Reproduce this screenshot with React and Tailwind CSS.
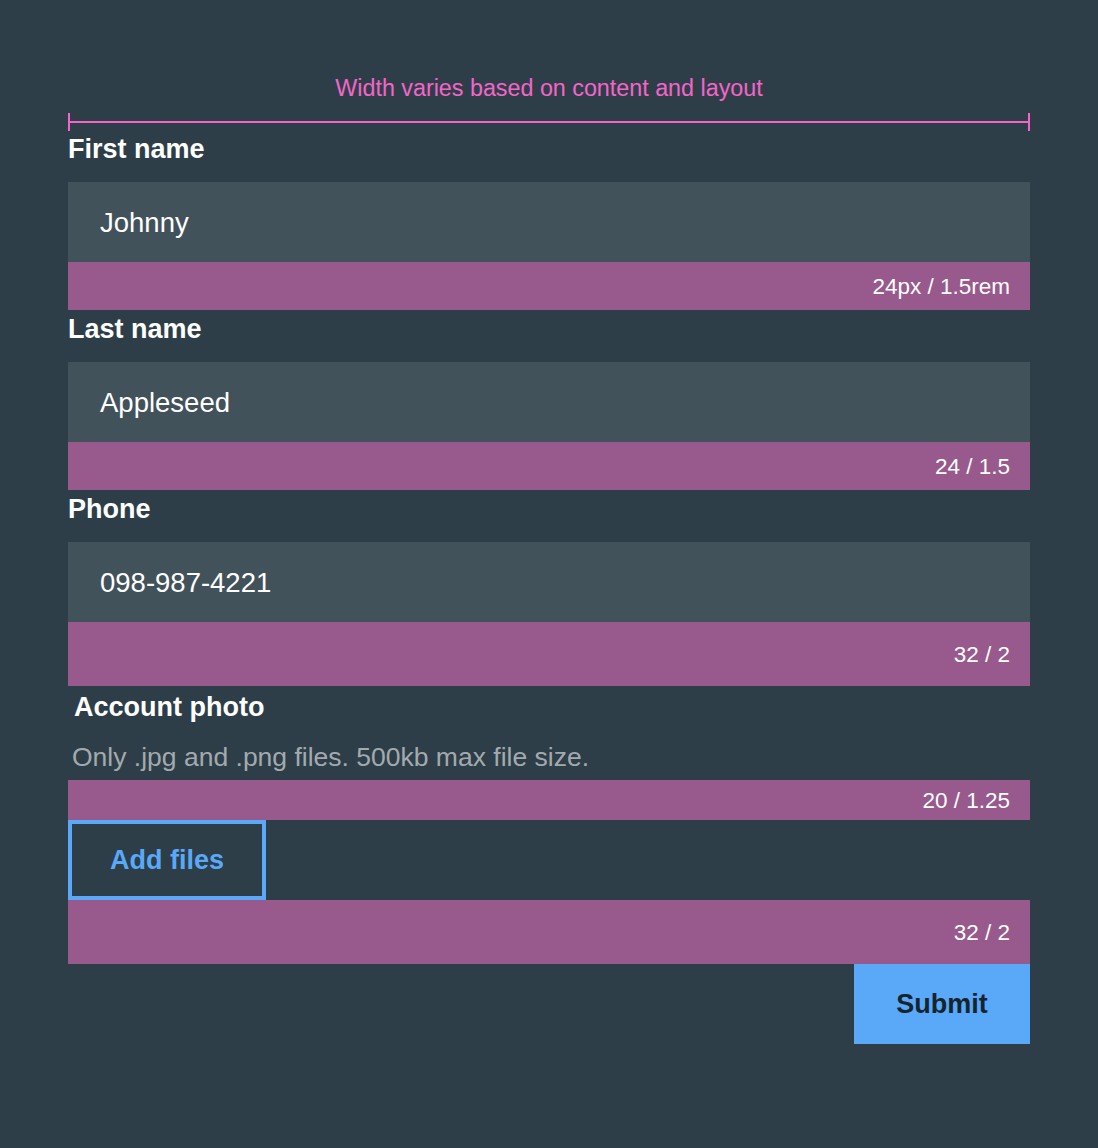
export default function App() {
  const font = { fontFamily: '"Liberation Sans", Arial, Helvetica, sans-serif' };
  const Label = ({ children }) => (
    <div className="h-[52px] pt-px text-[27px] font-bold leading-[36px] text-white">{children}</div>
  );
  const Input = ({ value }) => (
    <div className="flex h-20 items-center bg-[#42525b] px-8 pt-px text-[27.5px] text-white">{value}</div>
  );
  const Spacer = ({ h, text }) => (
    <div className={`flex items-center justify-end bg-[#98598c] pr-5 pt-px text-[22.5px] text-white ${h}`}>{text}</div>
  );
  return (
    <div className="min-h-screen bg-[#2d3e48] pt-[72px]" style={font}>
      <div className="mx-auto w-[962px]">
        <div className="text-center text-[23.3px] leading-[32px] text-[#f565c9]">
          Width varies based on content and layout
        </div>
        <div className="mt-[9px] flex h-[18px] items-center">
          <div className="h-[18px] w-[2px] bg-[#f565c9]" />
          <div className="h-[2px] flex-1 bg-[#f565c9]" />
          <div className="h-[18px] w-[2px] bg-[#f565c9]" />
        </div>
        <div className="-mt-px">
          <Label>First name</Label>
        </div>
        <Input value="Johnny" />
        <Spacer h="h-12" text="24px / 1.5rem" />
        <Label>Last name</Label>
        <Input value="Appleseed" />
        <Spacer h="h-12" text="24 / 1.5" />
        <Label>Phone</Label>
        <Input value="098-987-4221" />
        <Spacer h="h-16" text="32 / 2" />
        <div className="pl-[6px] text-[27px] font-bold leading-[42px] text-white">Account photo</div>
        <div className="pl-1 pt-[11px] pb-[5px] text-[26.5px] leading-[36px] text-[#a3aaae]">
          Only .jpg and .png files. 500kb max file size.
        </div>
        <Spacer h="h-10" text="20 / 1.25" />
        <div className="flex">
          <button className="flex h-20 w-[198px] items-center justify-center border-4 border-[#59a9f8] text-[27px] font-bold text-[#59a9f8]">
            Add files
          </button>
        </div>
        <Spacer h="h-16" text="32 / 2" />
        <div className="flex justify-end">
          <button className="flex h-20 w-[176px] items-center justify-center bg-[#59a9f8] text-[27px] font-bold text-[#15242f]">
            Submit
          </button>
        </div>
      </div>
    </div>
  );
}
